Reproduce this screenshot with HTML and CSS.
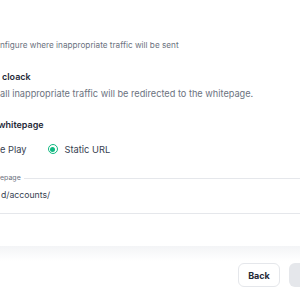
FILE: index.html
```html
<!DOCTYPE html>
<html>
    <head>
        <meta charset="UTF-8">
        <title>Whitepage</title>
        <link rel="stylesheet" href="styles.css">
    </head>
    <body>
        <div class="modal">
            <div class="content">
                <p class="subtitle">nfigure where inappropriate traffic will be sent</p>

                <p class="title cloack">cloack</p>
                <p class="desc">all inappropriate traffic will be redirected to the whitepage.</p>

                <p class="title whitepage">whitepage</p>

                <div class="radios">
                    <label class="option">
                        <span>e Play</span>
                    </label>
                    <label class="option">
                        <span class="radio checked"></span>
                        <span>Static URL</span>
                    </label>
                </div>

                <fieldset class="field">
                    <legend>epage</legend>
                    <div class="value">d/accounts/</div>
                </fieldset>
            </div>

            <div class="footer">
                <button class="btn back">Back</button>
                <button class="btn save" disabled>Save</button>
            </div>
        </div>
    </body>
</html>
```

FILE: styles.css
```css
* {
    margin: 0;
    padding: 0;
    box-sizing: border-box;
}

html, body {
    width: 100%;
    height: 100%;
}

body {
    background-color: #ffffff;
    font-family: Inter, "Noto Sans", sans-serif;
    overflow: hidden;
}

.modal {
    width: 340px;
}

.content {
    padding-top: 39px;
}

.subtitle {
    font-size: 8.2px;
    line-height: 12px;
    color: #6b7280;
    white-space: nowrap;
}

.desc {
    font-size: 9.2px;
    line-height: 12px;
    color: #6b7280;
    white-space: nowrap;
}

.title {
    font-size: 9px;
    line-height: 12px;
    font-weight: 600;
    color: #1f2937;
    white-space: nowrap;
}

.cloack {
    margin-top: 20px;
    margin-bottom: 5px;
    padding-left: 2px;
}

.whitepage {
    margin-top: 19px;
    margin-left: -2px;
}

.radios {
    display: flex;
    align-items: center;
    gap: 21px;
    height: 14px;
    margin-top: 11px;
    font-size: 9.3px;
    color: #374151;
}

.option {
    display: flex;
    align-items: center;
    gap: 7px;
}

.radio {
    width: 10px;
    height: 10px;
    border-radius: 50%;
    border: 1.5px solid #10b981;
    display: flex;
    align-items: center;
    justify-content: center;
}

.radio.checked::after {
    content: "";
    width: 5px;
    height: 5px;
    border-radius: 50%;
    background-color: #10b981;
}

.field {
    margin-top: 18px;
    margin-left: -20px;
    width: 400px;
    height: 40px;
    border: 1px solid #e5e7eb;
    padding: 0 0 0 16px;
}

.field legend {
    font-size: 7px;
    line-height: 8px;
    color: #6b7280;
    padding: 0 3px;
}

.value {
    padding-left: 4px;
    margin-top: 7px;
    font-size: 8.7px;
    line-height: 12px;
    color: #374151;
}

.footer {
    margin-top: 32px;
    padding: 17px 5px 0 0;
    height: 60px;
    display: flex;
    justify-content: flex-end;
    gap: 9px;
    background: linear-gradient(#f3f4f6, #ffffff 15px);
}

.btn {
    height: 24px;
    border-radius: 6px;
    font-family: Inter, "Noto Sans", sans-serif;
    font-size: 9px;
    font-weight: 700;
}

.back {
    width: 42px;
    border: 1px solid #e5e7eb;
    background-color: #ffffff;
    color: #1f2937;
}

.save {
    width: 46px;
    border: none;
    background-color: #e5e7eb;
    color: #9ca3af;
}
```
